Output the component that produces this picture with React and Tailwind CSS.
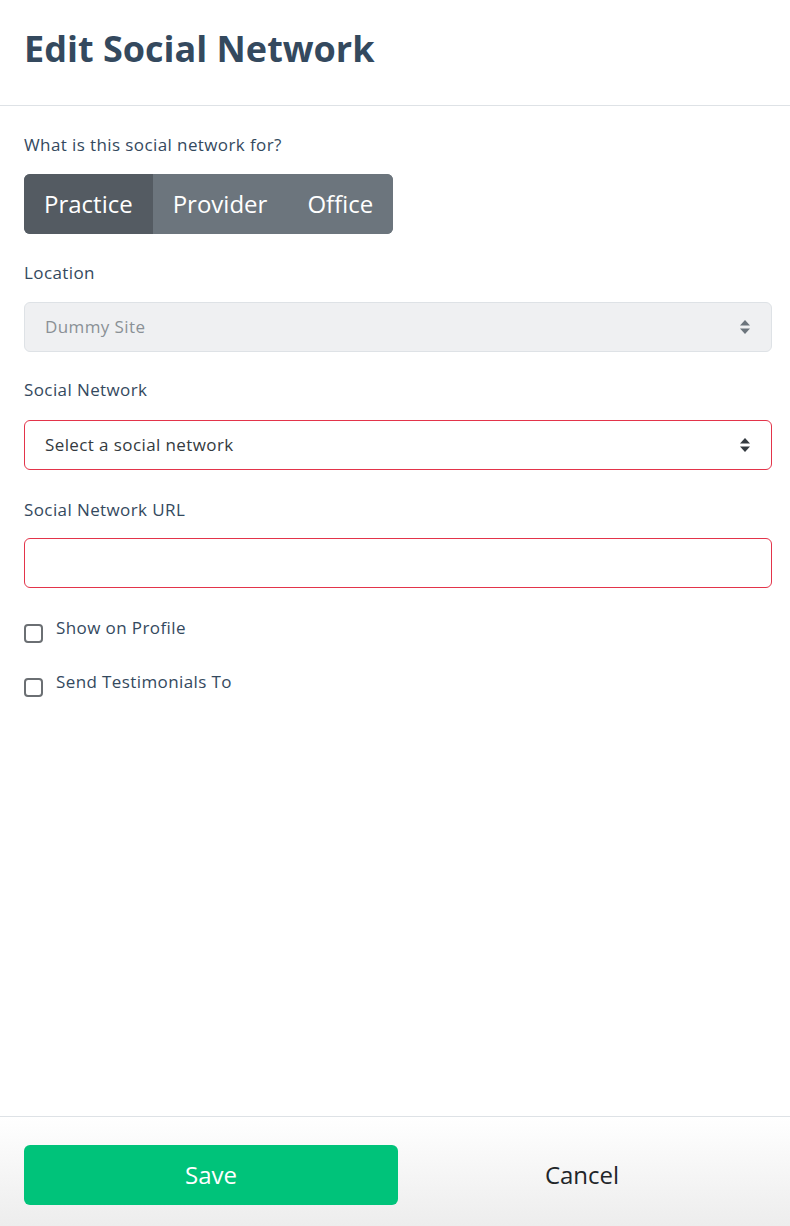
import React, { useState } from 'react';

const font = { fontFamily: '"Open Sans", "Noto Sans", "Liberation Sans", sans-serif' };

function Arrows({ color }) {
  return (
    <svg width="12" height="16" viewBox="0 0 12 16" className="shrink-0">
      <path d="M6 1 L11 6.5 H1 Z" fill={color} />
      <path d="M6 15 L11 9.5 H1 Z" fill={color} />
    </svg>
  );
}

export default function App() {
  const [forWhat, setForWhat] = useState('Practice');
  const tabs = ['Practice', 'Provider', 'Office'];

  return (
    <div className="w-[790px] h-[1226px] flex flex-col bg-white text-[#34495e]" style={font}>
      <div className="h-[106px] border-b border-[#dee2e6] px-6 flex items-center shrink-0">
        <h1 className="text-[36px] font-bold text-[#34495e] -mt-2">Edit Social Network</h1>
      </div>

      <div className="flex-1 pl-6 pr-[18px] pt-[27px]">
        <div className="text-[17px] leading-[24px] tracking-[0.4px] mb-[17px]">What is this social network for?</div>
        <div className="inline-flex rounded-md overflow-hidden bg-[#6c757d] h-[60px]">
          {tabs.map(t => (
            <button
              key={t}
              onClick={() => setForWhat(t)}
              className={`text-white text-[24px] px-[20px] ${forWhat === t ? 'bg-[#545b62]' : 'bg-[#6c757d]'}`}
            >
              {t}
            </button>
          ))}
        </div>

        <div className="text-[17px] leading-[24px] tracking-[0.4px] mt-[27px] mb-[17px]">Location</div>
        <div className="h-[50px] rounded-md border border-[#dee2e6] bg-[#eff0f2] flex items-center justify-between px-5">
          <span className="text-[17px] tracking-[0.4px] text-[#8a9096]">Dummy Site</span>
          <Arrows color="#6c757d" />
        </div>

        <div className="text-[17px] leading-[24px] tracking-[0.4px] mt-[26px] mb-[18px]">Social Network</div>
        <div className="h-[50px] rounded-md border border-[#e3344a] bg-white flex items-center justify-between px-5">
          <span className="text-[17px] tracking-[0.4px] text-[#343a40]">Select a social network</span>
          <Arrows color="#343a40" />
        </div>

        <div className="text-[17px] leading-[24px] tracking-[0.4px] mt-[28px] mb-[16px]">Social Network URL</div>
        <input className="w-full h-[50px] rounded-md border border-[#e3344a] bg-white px-5 outline-none" />

        <label className="flex items-start gap-[13px] mt-[28px]">
          <span className="w-[19px] h-[19px] mt-[8px] rounded-[4px] border-2 border-[#6b6f73] bg-white shrink-0" />
          <span className="text-[17px] leading-[24px] tracking-[0.4px]">Show on Profile</span>
        </label>
        <label className="flex items-start gap-[13px] mt-[27px]">
          <span className="w-[19px] h-[19px] mt-[8px] rounded-[4px] border-2 border-[#6b6f73] bg-white shrink-0" />
          <span className="text-[17px] leading-[24px] tracking-[0.4px]">Send Testimonials To</span>
        </label>
      </div>

      <div className="h-[110px] border-t border-[#dee2e6] px-6 pt-[28px] flex bg-gradient-to-b from-white to-[#ededed] shrink-0">
        <button className="w-[374px] h-[60px] rounded-md bg-[#00c37a] text-white text-[24px]">Save</button>
        <button className="flex-1 h-[60px] text-[24px] text-[#212529]">Cancel</button>
      </div>
    </div>
  );
}
